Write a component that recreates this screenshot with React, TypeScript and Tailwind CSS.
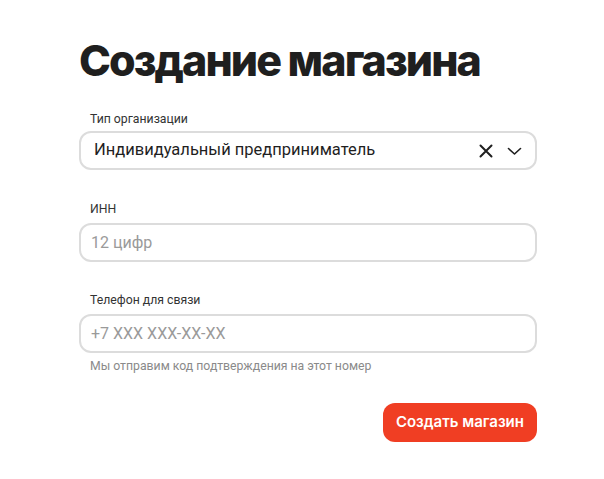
import React from "react";

export default function App() {
  return (
    <div className="min-h-screen bg-white" style={{ fontFamily: "Roboto, 'Noto Sans', sans-serif" }}>
      <div className="w-[458px] ml-[79px] pt-[32px] flex flex-col">
        <h1 className="text-[43px] leading-[56px] font-extrabold tracking-[-0.045em] text-[#1f1f1f]" style={{ fontFamily: "Inter, sans-serif" }}>Создание магазина</h1>
        <div className="mt-[23px] flex flex-col">
          <label className="text-[12.25px] leading-[16px] text-[#333] pl-[11px]">Тип организации</label>
          <div className="mt-[4px] h-[39px] border-2 border-[#dcdcdc] rounded-[12px] flex items-center pl-[13px] pr-[13px]">
            <span className="flex-1 text-[16.5px] text-[#1f1f1f]">Индивидуальный предприниматель</span>
            <svg width="14" height="14" viewBox="0 0 14 14" className="mr-[14px]">
              <path d="M1.5 1.5 L12.5 12.5 M12.5 1.5 L1.5 12.5" stroke="#1f1f1f" strokeWidth="2" strokeLinecap="round" />
            </svg>
            <svg width="15" height="14" viewBox="0 0 15 14">
              <path d="M1.5 4.5 L7.5 10 L13.5 4.5" stroke="#1f1f1f" strokeWidth="1.6" fill="none" strokeLinecap="round" strokeLinejoin="round" />
            </svg>
          </div>
        </div>
        <div className="mt-[31px] flex flex-col">
          <label className="text-[12.25px] leading-[16px] text-[#333] pl-[11px]">ИНН</label>
          <div className="mt-[6px] h-[39px] border-2 border-[#dcdcdc] rounded-[12px] flex items-center pl-[10px]">
            <span className="text-[16px] text-[#9a9a9a]">12 цифр</span>
          </div>
        </div>
        <div className="mt-[30px] flex flex-col">
          <label className="text-[12.25px] leading-[16px] text-[#333] pl-[11px]">Телефон для связи</label>
          <div className="mt-[6px] h-[39px] border-2 border-[#dcdcdc] rounded-[12px] flex items-center pl-[10px]">
            <span className="text-[16px] text-[#9a9a9a]">+7 XXX XXX-XX-XX</span>
          </div>
          <span className="mt-[5px] pl-[11px] text-[12.25px] leading-[16px] text-[#8a8a8a]">Мы отправим код подтверждения на этот номер</span>
        </div>
        <div className="mt-[29px] flex justify-end">
          <button className="h-[39px] px-[13px] rounded-[12px] bg-[#f03e23] text-white text-[15px] font-semibold" style={{ fontFamily: "Inter, sans-serif" }}>Создать магазин</button>
        </div>
      </div>
    </div>
  );
}
